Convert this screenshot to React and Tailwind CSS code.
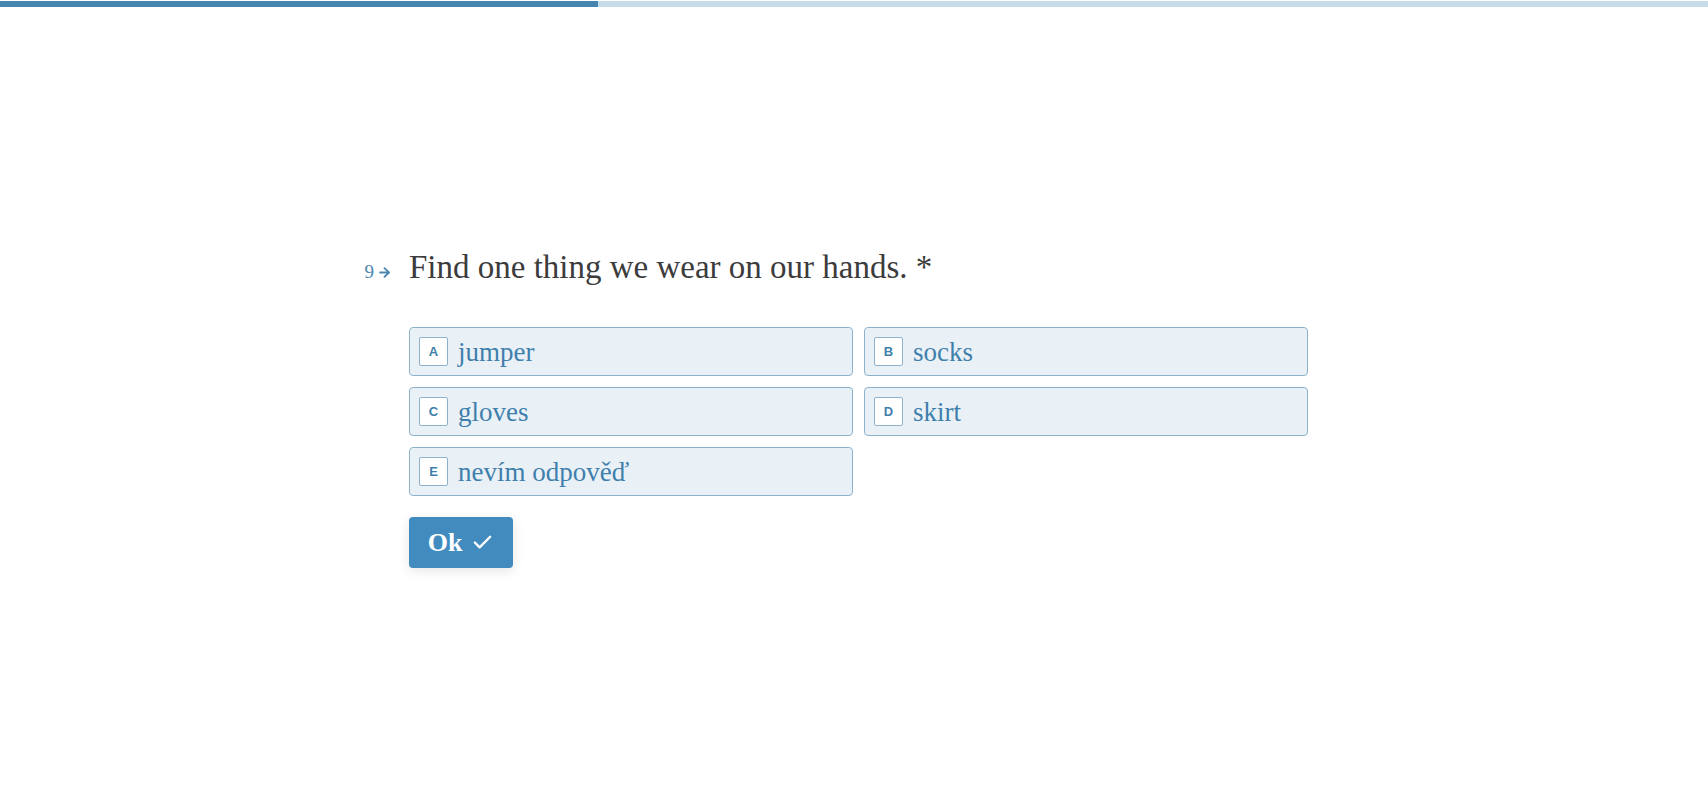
import { ArrowRight, Check } from "lucide-react";

// Opciones de la pregunta
const options = [
  { key: "A", label: "jumper" },
  { key: "B", label: "socks" },
  { key: "C", label: "gloves" },
  { key: "D", label: "skirt" },
  { key: "E", label: "nevím odpověď" },
];

const serif = "font-['Liberation_Serif',Georgia,serif]";

export default function App() {
  const progress = 35;

  return (
    <div className="min-h-screen bg-white">
      {/* Barra de progreso */}
      <div className="pt-[1px]">
        <div className="w-full h-[6px] bg-[#c6dce8]">
          <div className="h-full bg-[#4585b0]" style={{ width: `${progress}%` }}></div>
        </div>
      </div>

      <div className="ml-[409px] w-[899px] mt-[240px]">
        {/* Pregunta */}
        <div className="flex items-baseline -ml-[46px]">
          <div className="w-[46px] flex items-center justify-end gap-[3px] pr-[17px] text-[#4a87b0]">
            <span className={`${serif} text-[19px]`}>9</span>
            <ArrowRight size={15} strokeWidth={3} />
          </div>
          <h1 className={`${serif} text-[33px] leading-[40px] text-[#3c3c3c]`}>
            Find one thing we wear on our hands. *
          </h1>
        </div>

        {/* Opciones */}
        <div className="grid grid-cols-2 gap-[11px] mt-[40px]">
          {options.map((opt) => (
            <div
              key={opt.key}
              className="h-[49px] flex items-center pl-[9px] bg-[#e9f1f7] border border-[#8db3cc] rounded-[4px]"
            >
              <span className="w-[29px] h-[29px] flex items-center justify-center bg-white border border-[#8db3cc] rounded-[2px] text-[13px] font-bold text-[#3f7fac] font-['Liberation_Sans',Arial,sans-serif]">
                {opt.key}
              </span>
              <span className={`${serif} ml-[10px] text-[27px] leading-[34px] text-[#3f7fac]`}>
                {opt.label}
              </span>
            </div>
          ))}
        </div>

        {/* Botón Ok */}
        <button className="mt-[21px] w-[104px] h-[51px] flex items-center justify-center gap-[9px] bg-[#418bbf] rounded-[4px] shadow-[0_3px_12px_rgba(0,0,0,0.1)] text-white">
          <span className={`${serif} text-[26px] font-bold`}>Ok</span>
          <Check size={23} strokeWidth={2.5} />
        </button>
      </div>
    </div>
  );
}
